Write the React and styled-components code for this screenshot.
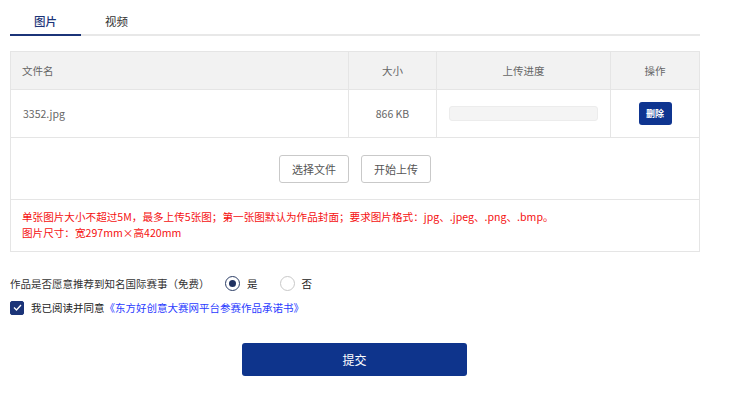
import React, { useState } from 'react';
import styled, { createGlobalStyle } from 'styled-components';

const GlobalStyle = createGlobalStyle`
    body {
        margin: 0;
        background: #fff;
        font-family: "Noto Sans CJK SC", "Noto Sans", sans-serif;
        font-size: 10.5px;
        color: #333;
    }
`;

const files = [
    { name: '3352.jpg', size: '866 KB', progress: 0 },
];

const columns = [
    { title: '文件名', width: 338, align: 'left' },
    { title: '大小', width: 88 },
    { title: '上传进度', width: 174 },
    { title: '操作', width: 89 },
];

const App = () => {
    const [recommend, setRecommend] = useState(true);
    const [agreed, setAgreed] = useState(true);
    const [tab, setTab] = useState(0);

    return (
        <Page>
            <GlobalStyle />
            <Tabs>
                {['图片', '视频'].map((t, i) => (
                    <Tab key={t} active={tab === i} onClick={() => setTab(i)}>{t}</Tab>
                ))}
            </Tabs>

            <Table>
                <colgroup>
                    {columns.map(c => <col key={c.title} style={{ width: c.width }} />)}
                </colgroup>
                <thead>
                    <tr>
                        {columns.map(c => <Th key={c.title} align={c.align}>{c.title}</Th>)}
                    </tr>
                </thead>
                <tbody>
                    {files.map(file => (
                        <tr key={file.name}>
                            <Td align="left">{file.name}</Td>
                            <Td>{file.size}</Td>
                            <Td>
                                <Progress>
                                    <ProgressFill style={{ width: `${file.progress}%` }} />
                                </Progress>
                            </Td>
                            <Td>
                                <DeleteButton>删除</DeleteButton>
                            </Td>
                        </tr>
                    ))}
                    <tr>
                        <ActionCell colSpan={4}>
                            <Actions>
                                <GhostButton>选择文件</GhostButton>
                                <GhostButton>开始上传</GhostButton>
                            </Actions>
                        </ActionCell>
                    </tr>
                    <tr>
                        <NoticeCell colSpan={4}>
                            单张图片大小不超过5M，最多上传5张图；第一张图默认为作品封面；要求图片格式：jpg、.jpeg、.png、.bmp。<br />
                            图片尺寸：宽297mm×高420mm
                        </NoticeCell>
                    </tr>
                </tbody>
            </Table>

            <RadioRow>
                <Label>作品是否愿意推荐到知名国际赛事（免费）</Label>
                <RadioOption onClick={() => setRecommend(true)}>
                    <RadioDot checked={recommend} />是
                </RadioOption>
                <RadioOption onClick={() => setRecommend(false)}>
                    <RadioDot checked={!recommend} />否
                </RadioOption>
            </RadioRow>

            <AgreeRow onClick={() => setAgreed(!agreed)}>
                <CheckBox checked={agreed}>
                    {agreed && (
                        <svg width="9" height="7" viewBox="0 0 9 7">
                            <path d="M1 3.5 L3.5 6 L8 1" fill="none" stroke="#fff" strokeWidth="1.3" />
                        </svg>
                    )}
                </CheckBox>
                我已阅读并同意<AgreeLink>《东方好创意大赛网平台参赛作品承诺书》</AgreeLink>
            </AgreeRow>

            <SubmitWrap>
                <SubmitButton>提交</SubmitButton>
            </SubmitWrap>
        </Page>
    );
};

const Page = styled.div`
    width: 690px;
    padding-left: 10px;
`;

const Tabs = styled.div`
    display: flex;
    height: 34px;
    border-bottom: 2px solid #e8e8e8;
`;

const Tab = styled.div`
    width: 71px;
    display: flex;
    align-items: center;
    justify-content: center;
    padding-top: 7px;
    box-sizing: border-box;
    font-size: 11.5px;
    cursor: pointer;
    color: ${props => props.active ? '#1b3478' : '#333'};
    font-weight: ${props => props.active ? 500 : 400};
    border-bottom: 2px solid ${props => props.active ? '#1b3478' : 'transparent'};
    margin-bottom: -2px;
`;

const Table = styled.table`
    margin-top: 15px;
    width: 689px;
    border-collapse: collapse;
    border: 1px solid #e5e5e5;
    color: #666;
    table-layout: fixed;
`;

const Th = styled.th`
    height: 37px;
    background: #f2f2f2;
    font-weight: 400;
    text-align: ${props => props.align || 'center'};
    padding: 0 11px;
    border: 1px solid #e5e5e5;
    color: #666;
`;

const Td = styled.td`
    height: 47px;
    text-align: ${props => props.align || 'center'};
    padding: 0 12px;
    border: 1px solid #e5e5e5;
`;

const Progress = styled.div`
    height: 13px;
    background: #f4f4f4;
    border: 1px solid #ececec;
    border-radius: 3px;
    overflow: hidden;
`;

const ProgressFill = styled.div`
    height: 100%;
    background: #0f3590;
`;

const DeleteButton = styled.button`
    width: 33px;
    height: 23px;
    padding: 0;
    border: none;
    border-radius: 3px;
    background: #0f3590;
    color: #fff;
    font-family: inherit;
    font-size: 9px;
    font-weight: 700;
    cursor: pointer;
`;

const ActionCell = styled.td`
    height: 59px;
    border: 1px solid #e5e5e5;
`;

const Actions = styled.div`
    display: flex;
    justify-content: center;
    gap: 12px;
`;

const GhostButton = styled.button`
    width: 70px;
    height: 28px;
    background: #fff;
    border: 1px solid #c9c9c9;
    border-radius: 3px;
    color: #555;
    font-family: inherit;
    font-size: 11px;
    cursor: pointer;
`;

const NoticeCell = styled.td`
    height: 49px;
    padding: 0 11px 2px;
    border: 1px solid #e5e5e5;
    color: #f51010;
    font-size: 10.6px;
    line-height: 16px;
`;

const RadioRow = styled.div`
    display: flex;
    align-items: center;
    margin-top: 22px;
    height: 18px;
`;

const Label = styled.span`
    color: #333;
    width: 215px;
`;

const RadioOption = styled.label`
    display: flex;
    align-items: center;
    gap: 7px;
    margin-right: 22px;
    color: #222;
    cursor: pointer;
`;

const RadioDot = styled.span`
    width: 15px;
    height: 15px;
    border-radius: 50%;
    box-sizing: border-box;
    border: 1px solid ${props => props.checked ? '#2c3e66' : '#c8c8c8'};
    display: flex;
    align-items: center;
    justify-content: center;

    &::after {
        content: '';
        width: 7px;
        height: 7px;
        border-radius: 50%;
        background: ${props => props.checked ? '#1f3160' : 'transparent'};
    }
`;

const AgreeRow = styled.div`
    display: flex;
    align-items: center;
    margin-top: 8px;
    color: #222;
    cursor: pointer;
`;

const CheckBox = styled.span`
    width: 14px;
    height: 14px;
    margin-right: 7px;
    border-radius: 2px;
    background: ${props => props.checked ? '#1b3478' : '#fff'};
    border: 1px solid ${props => props.checked ? '#1b3478' : '#ccc'};
    box-sizing: border-box;
    display: flex;
    align-items: center;
    justify-content: center;
`;

const AgreeLink = styled.a`
    color: #2a3bff;
    text-decoration: none;
`;

const SubmitWrap = styled.div`
    display: flex;
    margin-top: 28px;
    padding-left: 232px;
`;

const SubmitButton = styled.button`
    width: 225px;
    height: 33px;
    border: none;
    border-radius: 3px;
    background: #0e348c;
    color: #fff;
    font-family: inherit;
    font-size: 12px;
    cursor: pointer;
`;

export default App;
